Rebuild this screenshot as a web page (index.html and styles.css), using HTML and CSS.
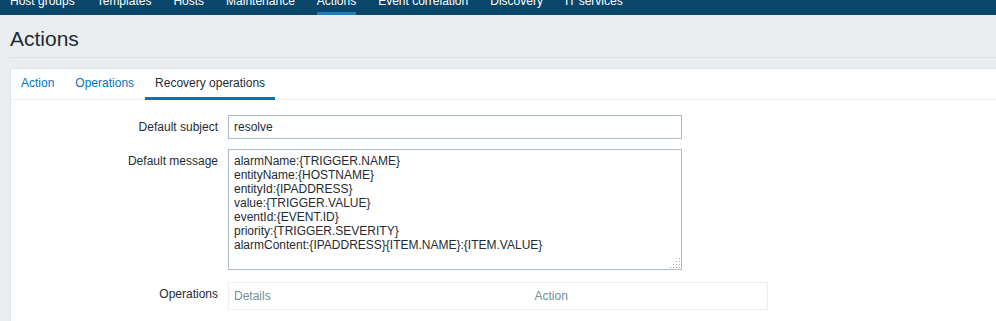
FILE: index.html
```html
<!DOCTYPE html>
<html lang="en">
<head>
    <meta charset="UTF-8">
    <meta name="viewport" content="width=device-width, initial-scale=1.0">
    <title>Configuration of actions</title>
    <link rel="stylesheet" href="styles.css">
</head>
<body>
    <nav class="top-nav">
        <a href="#">Host groups</a>
        <a href="#">Templates</a>
        <a href="#">Hosts</a>
        <a href="#">Maintenance</a>
        <a href="#" class="selected">Actions</a>
        <a href="#">Event correlation</a>
        <a href="#">Discovery</a>
        <a href="#">IT services</a>
    </nav>

    <main class="wrapper">
        <div class="header-title">
            <h1>Actions</h1>
        </div>

        <div class="tabs-panel">
            <ul class="tabs-nav">
                <li><a href="#">Action</a></li>
                <li><a href="#">Operations</a></li>
                <li class="active"><a href="#">Recovery operations</a></li>
            </ul>

            <div class="form-list">
                <div class="form-row">
                    <label class="form-label" for="subject">Default subject</label>
                    <div class="form-field">
                        <input type="text" id="subject" class="text-input" value="resolve">
                    </div>
                </div>

                <div class="form-row">
                    <label class="form-label" for="message">Default message</label>
                    <div class="form-field">
                        <div class="textarea-wrap">
                            <textarea id="message" class="text-area">alarmName:{TRIGGER.NAME}
entityName:{HOSTNAME}
entityId:{IPADDRESS}
value:{TRIGGER.VALUE}
eventId:{EVENT.ID}
priority:{TRIGGER.SEVERITY}
alarmContent:{IPADDRESS}{ITEM.NAME}:{ITEM.VALUE}</textarea>
                            <svg class="grip" width="10" height="10" viewBox="0 0 10 10">
                                <rect x="9" y="0" width="1" height="1"/>
                                <rect x="6" y="3" width="1" height="1"/>
                                <rect x="9" y="3" width="1" height="1"/>
                                <rect x="3" y="6" width="1" height="1"/>
                                <rect x="6" y="6" width="1" height="1"/>
                                <rect x="9" y="6" width="1" height="1"/>
                                <rect x="0" y="9" width="1" height="1"/>
                                <rect x="3" y="9" width="1" height="1"/>
                                <rect x="6" y="9" width="1" height="1"/>
                                <rect x="9" y="9" width="1" height="1"/>
                            </svg>
                        </div>
                    </div>
                </div>

                <div class="form-row ops-row">
                    <span class="form-label">Operations</span>
                    <div class="form-field">
                        <table class="ops-table">
                            <thead>
                                <tr>
                                    <th class="col-details">Details</th>
                                    <th>Action</th>
                                </tr>
                            </thead>
                        </table>
                    </div>
                </div>
            </div>
        </div>
    </main>
</body>
</html>
```

FILE: styles.css
```css
* {
    margin: 0;
    padding: 0;
    box-sizing: border-box;
}

body {
    font-family: "Liberation Sans", Arial, sans-serif;
    font-size: 12px;
    line-height: 14px;
    color: #1f2c33;
    background: #ebeef0;
    overflow: hidden;
}

.top-nav {
    display: flex;
    gap: 2px;
    height: 15px;
    overflow: hidden;
    background: #0a466a;
}

.top-nav a {
    display: block;
    margin: -6px 10px 0;
    padding-bottom: 4px;
    color: #fff;
    text-decoration: none;
    white-space: nowrap;
    border-bottom: 3px solid transparent;
}

.top-nav a.selected {
    border-bottom-color: #1f7fc2;
}

.wrapper {
    padding-left: 10px;
}

.header-title {
    padding: 12px 0 6px;
    border-bottom: 1px solid #dde2e6;
    margin-right: -10px;
}

.header-title h1 {
    font-size: 21px;
    font-weight: normal;
    line-height: 24px;
    color: #1f2c33;
}

.tabs-panel {
    margin: 10px -20px 0 0;
    background: #fff;
    border: 1px solid #dfe4e7;
    min-height: 260px;
}

.tabs-nav {
    display: flex;
    gap: 1px;
    list-style: none;
    border-bottom: 1px solid #ebeef0;
}

.tabs-nav li {
    margin-bottom: -1px;
}

.tabs-nav a {
    display: block;
    padding: 7px 10px;
    color: #0275b8;
    text-decoration: none;
    border-bottom: 3px solid transparent;
}

.tabs-nav .active a {
    color: #1f2c33;
    border-bottom-color: #0275b8;
}

/* form */
.form-list {
    padding-top: 10px;
}

.form-row {
    display: grid;
    grid-template-columns: 217px 1fr;
    padding: 5px 0;
}

.form-row.ops-row {
    padding-top: 7px;
}

.form-label {
    padding: 5px 10px 0 0;
    text-align: right;
    white-space: nowrap;
}

.text-input,
.text-area {
    display: block;
    width: 454px;
    font-family: inherit;
    font-size: 12px;
    line-height: 14px;
    color: #1f2c33;
    background: #fff;
    border: 1px solid #acbbc4;
    padding: 0 5px;
    outline: none;
}

.text-input {
    height: 24px;
}

.textarea-wrap {
    position: relative;
    width: 454px;
}

.text-area {
    height: 121px;
    padding: 4px 5px;
    resize: none;
    overflow: hidden;
}

.grip {
    position: absolute;
    right: 2px;
    bottom: 2px;
    fill: #9aa6ad;
}

.ops-table {
    width: 540px;
    border: 1px solid #ebeef0;
    border-collapse: collapse;
}

.ops-table th {
    padding: 6px 5px;
    font-weight: normal;
    text-align: left;
    color: #768d99;
}

.ops-table .col-details {
    width: 301px;
}
```
